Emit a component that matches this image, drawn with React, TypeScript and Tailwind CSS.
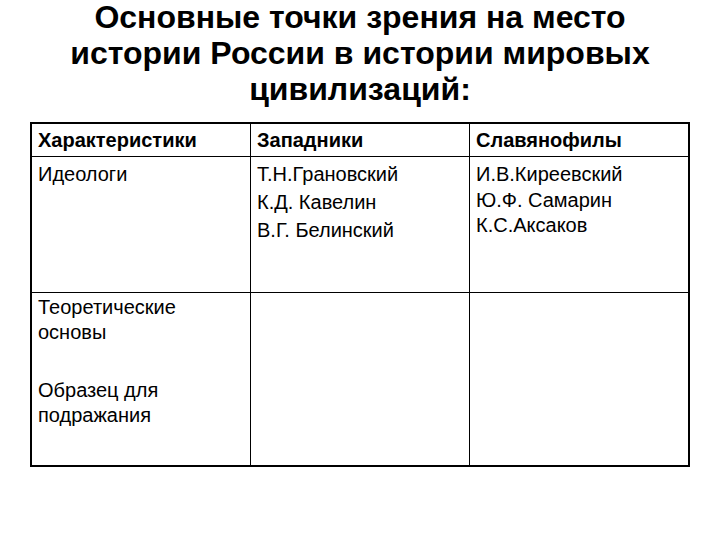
import React from "react";

export default function App() {
  const f = { fontFamily: '"Liberation Sans", Arial, sans-serif' };
  return (
    <div className="w-[720px] h-[540px] bg-white text-black overflow-hidden" style={f}>
      <div className="-mt-[1px] text-center font-bold text-[32px] leading-[36px]">
        <div>Основные точки зрения на место</div>
        <div>истории России в истории мировых</div>
        <div>цивилизаций:</div>
      </div>
      <div className="ml-[30px] mt-[15px] w-[660px] border-2 border-black grid grid-cols-[219px_219px_1fr] grid-rows-[33px_136px_172px] text-[20px]">
        <div className="border-r border-b border-black pl-[6px] pt-[6px] font-bold leading-[20px]">Характеристики</div>
        <div className="border-r border-b border-black pl-[6px] pt-[6px] font-bold leading-[20px]">Западники</div>
        <div className="border-b border-black pl-[6px] pt-[6px] font-bold leading-[20px]">Славянофилы</div>
        <div className="border-r border-b border-black pl-[6px] pt-[3px] leading-[28px]">Идеологи</div>
        <div className="border-r border-b border-black pl-[6px] pt-[3px] leading-[28px]">
          <div>Т.Н.Грановский</div>
          <div>К.Д. Кавелин</div>
          <div>В.Г. Белинский</div>
        </div>
        <div className="border-b border-black pl-[6px] pt-[4px] leading-[26px]">
          <div>И.В.Киреевский</div>
          <div>Ю.Ф. Самарин</div>
          <div className="-mt-[1px]">К.С.Аксаков</div>
        </div>
        <div className="border-r border-black pl-[6px] pt-[2px] leading-[25px]">
          <div>Теоретические</div>
          <div>основы</div>
          <div className="mt-[33px]">Образец для</div>
          <div>подражания</div>
        </div>
        <div className="border-r border-black"></div>
        <div></div>
      </div>
    </div>
  );
}
